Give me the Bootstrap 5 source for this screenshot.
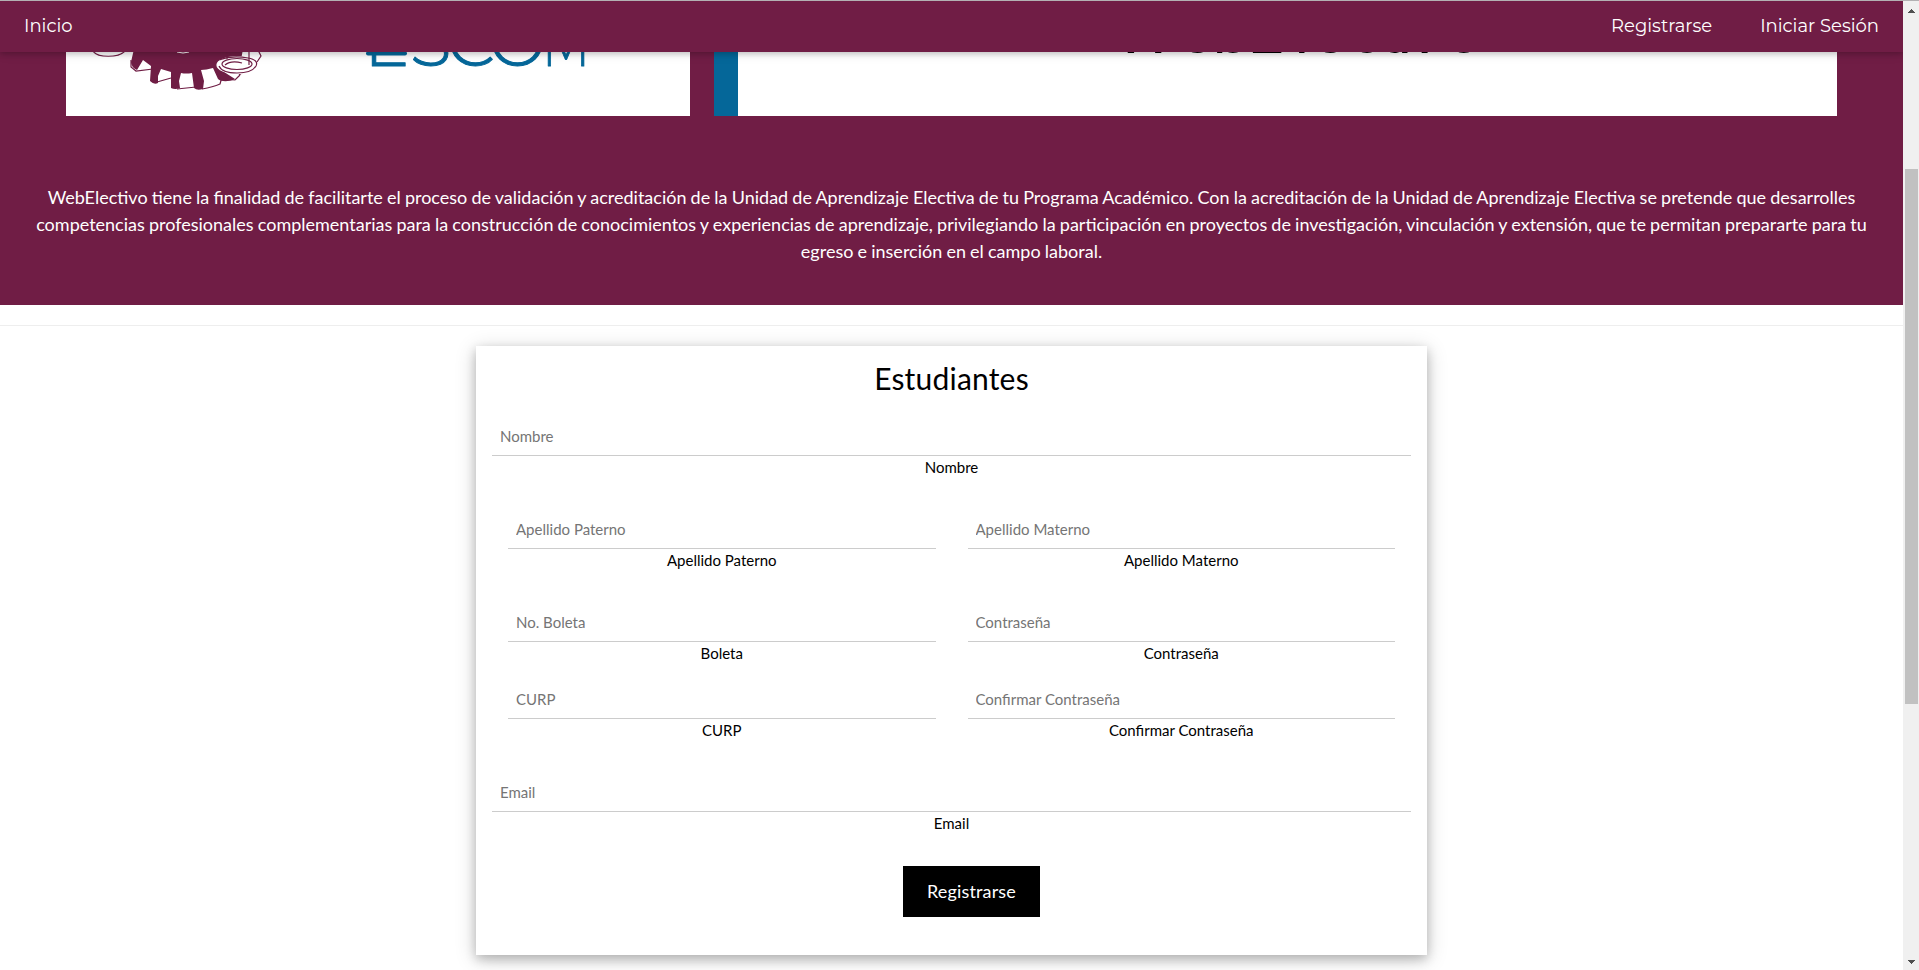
<!DOCTYPE html>
<html lang="es">
<head>
<meta charset="utf-8">
<title>WebElectivo</title>
<link href="https://cdn.jsdelivr.net/npm/bootstrap@5.3.0/dist/css/bootstrap.min.css" rel="stylesheet">
<style>
  :root { --guinda: #701d45; }
  body { font: 15px/22.5px Lato, sans-serif; color: #000; background: #fff; }
  .window { height: 970px; border-top: 1px solid #b3b1b3; }
  .top-menu { height: 51px; background: var(--guinda); z-index: 5; font: 18px/27px Montserrat, Inter, sans-serif;
    box-shadow: 0 2px 5px rgba(0,0,0,.16), 0 2px 10px rgba(0,0,0,.12); }
  .top-menu a { color: #fff; padding: 12px 24px; }
  .hero { background: var(--guinda); height: 253px; color: #fff; }
  .banners { height: 64px; padding: 0 66px; gap: 24px; }
  .logo-box { width: 624px; background: #fff; }
  .title-box { background: #fff; border-left: 24.5px solid #056799; }
  .banners svg { display: block; }
  .intro { font-size: 18px; line-height: 27px; padding: 68px 32px 0; word-spacing: -.45px; }
  .divider { margin: 20px 0; border-top: 1px solid #eee; opacity: 1; }
  .form-card { width: 951px; height: 609px; padding: 0 16px; background: #fff;
    box-shadow: 0 4px 10px rgba(0,0,0,.2), 0 4px 20px rgba(0,0,0,.19); }
  .form-card h2 { font-size: 30px; line-height: 45px; letter-spacing: .2px; margin: 0; padding: 10px 0 16px; color: #000; }
  .field { margin-bottom: 31px; height: 62px; }
  .field input { display: block; width: 100%; height: 39px; padding: 0 8px; border: 0; border-bottom: 1px solid #ccc; background: none; }
  .field input::placeholder { color: #757575; opacity: 1; }
  .field label { display: block; line-height: 23px; }
  .pair { display: grid; grid-template-columns: 1fr 1fr; gap: 32px; padding: 0 16px; }
  .pair.tight .field { margin-bottom: 15px; }
  .send { width: 137px; height: 51px; margin-left: 411px; background: #000; color: #fff; font-size: 18px; letter-spacing: .15px; border: 0; padding: 0; border-radius: 0; }
  .scroller { width: 16px; background: #f0f0f0; padding: 8px 0 6px; }
  .thumb { width: 13px; height: 535px; background: #c1c1c1; margin-top: 156px; }
</style>
</head>
<body class="overflow-hidden">
<div class="window d-flex">
  <main class="flex-grow-1 overflow-hidden">
    <nav class="top-menu d-flex justify-content-between position-relative">
      <a class="text-decoration-none" href="#">Inicio</a>
      <div class="d-flex">
        <a class="text-decoration-none" href="#">Registrarse</a>
        <a class="text-decoration-none" href="#">Iniciar Sesión</a>
      </div>
    </nav>
    <header class="hero text-center">
      <div class="banners d-flex">
        <div class="logo-box">
          <svg width="624" height="64" viewBox="66 52 624 64">
            <g fill="none" stroke="#6f1d44" stroke-width="1.2">
              <path d="M93 51C97 58 119 58 125 51M131 60V67L136 71L153 69M157 82L171 78M177 89L196 87M202 89Q213 87 220 84L222 77M222 79L235 80L240 75M239 75L249 68M258 50L261 56L257 62"/>
            </g>
            <path fill="#6f1d44" d="M134 49H243L241 60C227 64 220 67 221 70L235 79C229 82 221 82 218 79L213 68Q206 70 201 70L204 81L203 89Q197 91 194 88L192 73Q186 74 181 73L179 81L180 88Q175 90 171 88L171 72L161 69L158 76L158 83Q154 85 150 81L151 66L143 60L137 70Q131 67 131 62Z"/>
            <path fill="none" stroke="#fff" d="M177 52Q183 54 189 52"/>
            <g fill="#fff" stroke="#6f1d44" stroke-width="1.2">
              <ellipse cx="237" cy="65" rx="20" ry="8.5" stroke="#fff"/>
              <path d="M219 60Q232 55 248 58Q259 60 256 66Q252 73 237 73Q222 73 219 66"/>
              <ellipse cx="237" cy="64" rx="15" ry="5.5"/>
              <path d="M225 65Q231 60 242 63M249 52V65M227 52V59M229 52L230 56" fill="none"/>
            </g>
            <path d="M368 53.5H405" stroke="#056799" stroke-width="4" stroke-linecap="round"/>
            <g font-family="Montserrat, Inter, sans-serif" font-weight="300" font-size="68" fill="#056799" stroke="#056799" stroke-width="1" stroke-linejoin="round">
              <text y="66" x="364 410 447 489">ESCO</text>
              <text transform="translate(542 66) scale(.74 1)">M</text>
            </g>
          </svg>
        </div>
        <div class="title-box flex-grow-1">
          <svg width="1098" height="64" viewBox="739 52 1098 64">
            <text y="53" x="1114 1180 1213 1248 1295 1313 1350 1380 1398 1410 1447" font-family="Montserrat, Inter, sans-serif" font-size="56" font-weight="500" fill="#000">WebElectivo</text>
          </svg>
        </div>
      </div>
      <p class="intro mb-0">WebElectivo tiene la finalidad de facilitarte el proceso de validación y acreditación de la Unidad de Aprendizaje Electiva de tu Programa Académico. Con la acreditación de la Unidad de Aprendizaje Electiva se pretende que desarrolles competencias profesionales complementarias para la construcción de conocimientos y experiencias de aprendizaje, privilegiando la participación en proyectos de investigación, vinculación y extensión, que te permitan prepararte para tu egreso e inserción en el campo laboral.</p>
    </header>
    <hr class="divider">
    <form class="form-card mx-auto text-center">
      <h2 class="fw-normal">Estudiantes</h2>
      <div class="field"><input id="nombre" placeholder="Nombre"><label for="nombre">Nombre</label></div>
      <div class="pair">
        <div class="field"><input id="paterno" placeholder="Apellido Paterno"><label for="paterno">Apellido Paterno</label></div>
        <div class="field"><input id="materno" placeholder="Apellido Materno"><label for="materno">Apellido Materno</label></div>
      </div>
      <div class="pair tight">
        <div class="field"><input id="boleta" placeholder="No. Boleta"><label for="boleta">Boleta</label></div>
        <div class="field"><input id="clave" type="password" placeholder="Contraseña"><label for="clave">Contraseña</label></div>
      </div>
      <div class="pair">
        <div class="field"><input id="curp" placeholder="CURP"><label for="curp">CURP</label></div>
        <div class="field"><input id="clave2" type="password" placeholder="Confirmar Contraseña"><label for="clave2">Confirmar Contraseña</label></div>
      </div>
      <div class="field"><input id="email" placeholder="Email"><label for="email">Email</label></div>
      <button type="button" class="send btn d-block">Registrarse</button>
    </form>
  </main>
  <aside class="scroller flex-shrink-0 d-flex flex-column align-items-center">
    <svg width="7" height="4" shape-rendering="crispEdges"><path d="M3 0h1v1h1v1h1v1h1v1H0V3h1V2h1V1h1z" fill="#505050"/></svg>
    <div class="thumb"></div>
    <svg class="mt-auto" width="7" height="4" shape-rendering="crispEdges"><path d="M0 0h7v1H6v1H5v1H4v1H3V3H2V2H1V1H0z" fill="#505050"/></svg>
  </aside>
</div>
<script src="https://cdn.jsdelivr.net/npm/bootstrap@5.3.0/dist/js/bootstrap.bundle.min.js"></script>
</body>
</html>
